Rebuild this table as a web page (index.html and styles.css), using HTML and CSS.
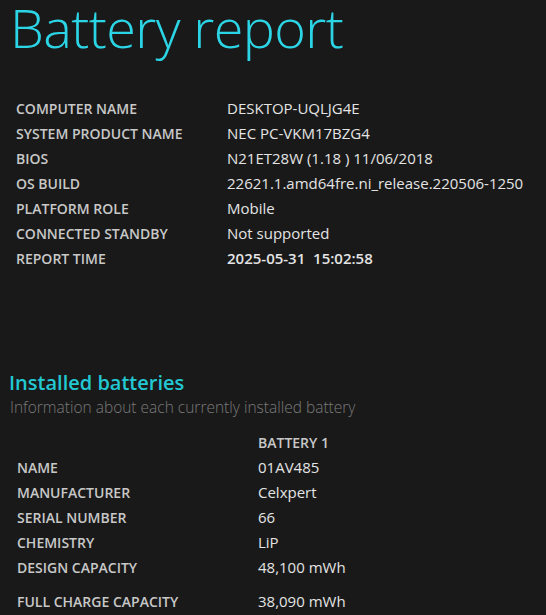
FILE: index.html
```html
<!DOCTYPE html>
<html>
<head>
<meta charset="utf-8">
<link rel="stylesheet" href="styles.css">
</head>
<body>
<h1 class="title">Battery report</h1>
<table class="info">
  <tr><td class="label">COMPUTER NAME</td><td class="value">DESKTOP-UQLJG4E</td></tr>
  <tr><td class="label">SYSTEM PRODUCT NAME</td><td class="value">NEC PC-VKM17BZG4</td></tr>
  <tr><td class="label">BIOS</td><td class="value">N21ET28W (1.18 ) 11/06/2018</td></tr>
  <tr><td class="label">OS BUILD</td><td class="value">22621.1.amd64fre.ni_release.220506-1250</td></tr>
  <tr><td class="label">PLATFORM ROLE</td><td class="value">Mobile</td></tr>
  <tr><td class="label">CONNECTED STANDBY</td><td class="value">Not supported</td></tr>
  <tr><td class="label">REPORT TIME</td><td class="value strong">2025-05-31 &nbsp;15:02:58</td></tr>
</table>
<h2 class="section">Installed batteries</h2>
<div class="subtitle">Information about each currently installed battery</div>
<table class="batteries">
  <tr><td class="label"></td><td class="head">BATTERY 1</td></tr>
  <tr><td class="label">NAME</td><td class="value">01AV485</td></tr>
  <tr><td class="label">MANUFACTURER</td><td class="value">Celxpert</td></tr>
  <tr><td class="label">SERIAL NUMBER</td><td class="value">66</td></tr>
  <tr><td class="label">CHEMISTRY</td><td class="value">LiP</td></tr>
  <tr><td class="label">DESIGN CAPACITY</td><td class="value">48,100 mWh</td></tr>
  <tr class="spaced"><td class="label">FULL CHARGE CAPACITY</td><td class="value">38,090 mWh</td></tr>
</table>
</body>
</html>
```
FILE: styles.css
```css
html, body {
  background: #191919;
}
body {
  margin: 0;
  padding: 0 0 0 12px;
  font-family: "Open Sans", "Noto Sans", sans-serif;
  color: #e6e6e6;
}
.title {
  margin: 0 0 0 -2px;
  font-weight: 350;
  font-size: 54px;
  line-height: 54px;
  color: #2cd5e6;
  letter-spacing: -0.6px;
}
table {
  border-collapse: collapse;
}
td {
  padding: 0;
  line-height: 25px;
  vertical-align: middle;
  white-space: nowrap;
}
.info {
  margin: 42px 0 0 4px;
}
.info .label {
  width: 211px;
}
.label {
  font-weight: 600;
  font-size: 14px;
  color: #c8c8c8;
}
.value {
  font-size: 15px;
  color: #e4e4e4;
}
.strong {
  font-weight: 600;
}
.section {
  margin: 99px 0 0 -3px;
  font-size: 20px;
  font-weight: 600;
  line-height: 26px;
  color: #22c8d2;
}
.subtitle {
  margin: 0 0 0 -2px;
  font-size: 15.5px;
  font-weight: 300;
  color: #7a7a7a;
  line-height: 22px;
}
.batteries {
  margin: 12px 0 0 5px;
}
.batteries .label {
  width: 241px;
}
.head {
  font-weight: 600;
  font-size: 14px;
  color: #c8c8c8;
}
.spaced td {
  padding-top: 9px;
}
```
